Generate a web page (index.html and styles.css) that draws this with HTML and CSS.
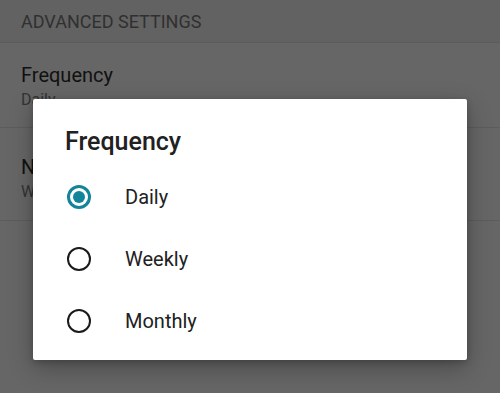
FILE: index.html
```html
<!DOCTYPE html>
<html>
<head>
<meta charset="utf-8">
<link rel="stylesheet" href="styles.css">
</head>
<body>
<div class="screen">
  <div class="section-header">ADVANCED SETTINGS</div>
  <div class="pref pref-first">
    <div class="pref-title">Frequency</div>
    <div class="pref-sub">Daily</div>
  </div>
  <div class="pref pref-second">
    <div class="pref-title">Notifications</div>
    <div class="pref-sub">Weekly</div>
  </div>
  <div class="pref-rest"></div>

  <div class="dialog">
    <div class="dialog-title">Frequency</div>
    <div class="option">
      <span class="radio checked"></span>
      <span class="label">Daily</span>
    </div>
    <div class="option">
      <span class="radio"></span>
      <span class="label">Weekly</span>
    </div>
    <div class="option">
      <span class="radio"></span>
      <span class="label">Monthly</span>
    </div>
  </div>
</div>
</body>
</html>
```

FILE: styles.css
```css
* { box-sizing: border-box; }
html, body { margin: 0; padding: 0; }
body {
  font-family: Roboto, "Noto Sans", sans-serif;
  background: #666666;
}
.screen {
  position: relative;
  width: 500px;
  height: 393px;
  overflow: hidden;
  background: #666666;
  display: flex;
  flex-direction: column;
}
.section-header {
  height: 43px;
  padding: 12px 0 0 21px;
  font-size: 18px;
  line-height: 20px;
  color: #303030;
  background: #626262;
  border-bottom: 1px solid #5c5c5c;
}
.pref {
  padding-left: 21px;
  border-bottom: 1px solid #5c5c5c;
  white-space: nowrap;
}
.pref-first { height: 85px; padding-top: 20px; }
.pref-second { height: 93px; padding-top: 27px; }
.pref-title {
  font-size: 20px;
  line-height: 24px;
  color: #111111;
}
.pref-sub {
  margin-top: 3px;
  font-size: 16px;
  line-height: 20px;
  color: #333333;
}
.pref-rest { flex: 1; }

.dialog {
  position: absolute;
  left: 33px;
  top: 99px;
  width: 434px;
  height: 261px;
  background: #ffffff;
  border-radius: 2px;
  box-shadow: 0 8px 24px rgba(0,0,0,0.28), 0 2px 6px rgba(0,0,0,0.2);
  padding: 27px 32px 8px 32px;
  display: flex;
  flex-direction: column;
}
.dialog-title {
  font-size: 25px;
  font-weight: 500;
  line-height: 32px;
  color: #212121;
  margin-bottom: 8px;
}
.option {
  height: 62px;
  display: flex;
  align-items: center;
}
.radio {
  width: 24px;
  height: 24px;
  margin-left: 2px;
  border: 2.5px solid #1a1a1a;
  border-radius: 50%;
  display: flex;
  align-items: center;
  justify-content: center;
  flex-shrink: 0;
}
.radio.checked {
  border: 3px solid #14849a;
}
.radio.checked::after {
  content: "";
  width: 12px;
  height: 12px;
  border-radius: 50%;
  background: #14849a;
}
.label {
  margin-left: 34px;
  font-size: 20px;
  color: #212121;
}
```
